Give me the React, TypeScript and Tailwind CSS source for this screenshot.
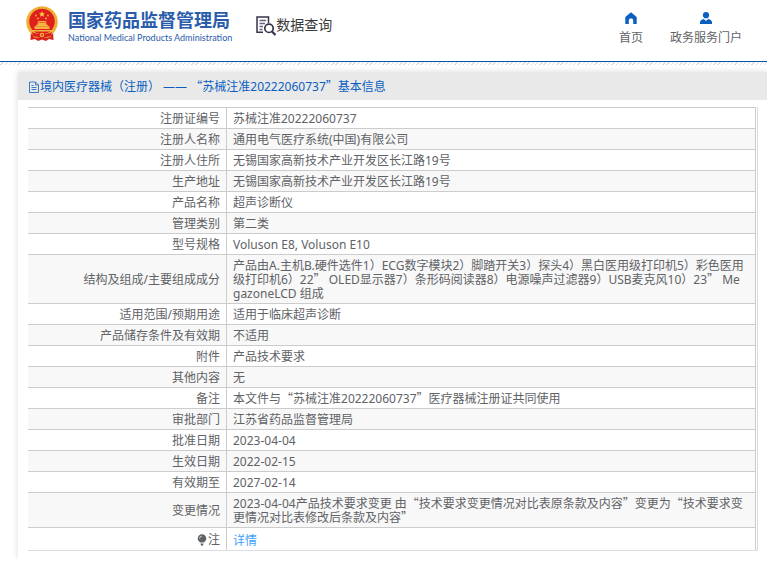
import type { ReactNode } from "react";

type Row = { label: string; value: string };

const rows: Row[] = [
  { label: "注册证编号", value: "苏械注准20222060737" },
  { label: "注册人名称", value: "通用电气医疗系统(中国)有限公司" },
  { label: "注册人住所", value: "无锡国家高新技术产业开发区长江路19号" },
  { label: "生产地址", value: "无锡国家高新技术产业开发区长江路19号" },
  { label: "产品名称", value: "超声诊断仪" },
  { label: "管理类别", value: "第二类" },
  { label: "型号规格", value: "Voluson E8, Voluson E10" },
  {
    label: "结构及组成/主要组成成分",
    value:
      "产品由A.主机B.硬件选件1）ECG数字模块2）脚踏开关3）探头4）黑白医用级打印机5）彩色医用级打印机6）22” OLED显示器7）条形码阅读器8）电源噪声过滤器9）USB麦克风10）23” MegazoneLCD 组成",
  },
  { label: "适用范围/预期用途", value: "适用于临床超声诊断" },
  { label: "产品储存条件及有效期", value: "不适用" },
  { label: "附件", value: "产品技术要求" },
  { label: "其他内容", value: "无" },
  { label: "备注", value: "本文件与“苏械注准20222060737”医疗器械注册证共同使用" },
  { label: "审批部门", value: "江苏省药品监督管理局" },
  { label: "批准日期", value: "2023-04-04" },
  { label: "生效日期", value: "2022-02-15" },
  { label: "有效期至", value: "2027-02-14" },
  {
    label: "变更情况",
    value:
      "2023-04-04产品技术要求变更 由“技术要求变更情况对比表原条款及内容”变更为“技术要求变更情况对比表修改后条款及内容”",
  },
];

// Curly quotes take the full-width glyphs of the Chinese font
const CnText = ({ children }: { children: string }) => (
  <>
    {children.split(/([“”])/).map((part, i) =>
      part === "“" || part === "”" ? (
        <span key={i} className="font-['Noto_Sans_CJK_SC',sans-serif] leading-[10px]">{part}</span>
      ) : (
        part
      )
    )}
  </>
);

const Emblem = () => (
  <svg viewBox="0 0 32 36" className="h-9 w-8 shrink-0" aria-hidden="true">
    <path d="M5 24 L4.500 34 L9 33 L12 35 L16 33.500 L20 35 L23 33 L27.500 34 L27 24Z" fill="#d8201c" />
    <circle cx="16" cy="16" r="15.800" fill="#f0b83c" />
    <circle cx="16" cy="16" r="14.300" fill="none" stroke="#e39a2c" strokeWidth="1" strokeDasharray="2 1.500" />
    <circle cx="16" cy="15.500" r="12.800" fill="#df1f1c" />
    <path d="M16 5.200l.9 2h2.100l-1.600 1.400.6 2.200-2-1.200-2 1.200.6-2.200L13 7.200h2.100z" fill="#f8d04c" />
    <g fill="#f3b540">
      <circle cx="10" cy="9.500" r=".9" />
      <circle cx="22" cy="9.500" r=".9" />
      <circle cx="12" cy="12.500" r=".9" />
      <circle cx="20" cy="12.500" r=".9" />
      <path d="M11 16.500l1.500-1.500h7l1.500 1.500zM11.800 17h8.400v1.500h-8.400zM9.500 20l1.500-1.500h10l1.500 1.500zM8.500 20.300h15v2.700h-15zM5.500 24h21l-1 1.600h-19z" />
    </g>
    <path d="M6 26c3 1.500 6 2 7.500 2.300a2.600 2.600 0 0 1 5 0C20 28 23 27.500 26 26l-1 3.500c-2 1-4.500 1.500-6 1.500a3.500 3.500 0 0 1-6 0c-1.500 0-4-.5-6-1.500z" fill="#d8201c" />
    <circle cx="16" cy="29" r="2.200" fill="#f0b83c" />
    <circle cx="16" cy="29" r=".9" fill="#d8201c" />
    <path d="M7 30.500c2 .8 3.500 1 5 1M25 30.500c-2 .8-3.500 1-5 1" stroke="#f0a83c" strokeWidth=".8" fill="none" />
  </svg>
);

const SearchDocIcon = () => (
  <svg viewBox="0 0 20 20" className="h-5 w-5 shrink-0" fill="none" stroke="#34344a" aria-hidden="true">
    <path d="M7 16.200H1V1h11.500v6" strokeWidth="1.500" />
    <path d="M3.500 4.500h6.500M3.500 7.500h5.500M3.500 10.500h3.500M3.500 13.500h3" strokeWidth="1.300" stroke="#66667a" />
    <circle cx="13" cy="12.300" r="4.200" strokeWidth="1.700" />
    <path d="M16 15.500l3.500 3.500" strokeWidth="2.200" />
  </svg>
);

const HomeIcon = () => (
  <svg viewBox="0 0 12 12" className="h-3 w-3" fill="#0a5fc0" aria-hidden="true">
    <path d="M6 .3L.3 5v7h3.500V8.300c0-1 .8-1.700 2.200-1.700s2.200.7 2.200 1.700V12h3.500V5z" />
  </svg>
);

const UserIcon = () => (
  <svg viewBox="0 0 12 12" className="h-3 w-3" fill="#0a5fc0" aria-hidden="true">
    <circle cx="6" cy="3.200" r="3.100" />
    <path d="M0 12V10.500c0-2 1.500-3.100 3.800-3.500L6 9l2.200-2C10.500 7.400 12 8.500 12 10.500V12z" />
  </svg>
);

const FileIcon = () => (
  <svg viewBox="0 0 10 12" className="mr-px h-3 w-[10px] shrink-0" fill="none" stroke="#3b7cc9" aria-hidden="true">
    <path d="M.5 1h6l3 3v7.500h-9zM6.500 1v3h3M2.500 4.500h2M2.500 6.500h5M2.500 8.500h5" />
  </svg>
);

const BulbIcon = () => (
  <svg viewBox="0 0 10 12" className="mr-px h-3 w-[10px]" fill="#5f6266" aria-hidden="true">
    <path d="M5 .2a4.300 4.300 0 0 0-4.300 4.300c0 2 1.500 3 2.500 4.100h3.600c1-1.100 2.500-2.100 2.500-4.100A4.300 4.300 0 0 0 5 .2zM3.600 9.400h2.800v1.200L5.500 11.700h-1l-.9-1.100z" />
    <path d="M2.500 4.500A2.400 2.400 0 0 1 4.800 2.200" stroke="#fff" strokeWidth=".7" fill="none" />
  </svg>
);

const NavItem = ({ icon, label }: { icon: ReactNode; label: string }) => (
  <a href="#" className="flex flex-col items-center gap-[5px] leading-[18px]">
    {icon}
    {label}
  </a>
);

const labelCell = "border-r border-b border-[#ccc] pt-1 pb-[2px] pr-[6px] text-right font-normal";
const valueCell = "border-r border-b border-[#ccc] pt-1 pb-[2px] pr-[9px] pl-[6px] break-all";

const App = () => {
  return (
    <div className="font-['Noto_Sans','Noto_Sans_CJK_SC',sans-serif] text-xs text-[#606266]">
      <header>
        <div className="box-content flex h-[61px] items-start justify-between border-b border-[#0a57a8] pr-[25px] pl-[26px]">
          <div className="flex items-start pt-[6px]">
            <Emblem />
            <div className="ml-[10px] pt-[3px] text-[#2a5cab]">
              <h1 className="text-[18px] leading-[22px] font-bold">国家药品监督管理局</h1>
              <p className="font-['Lato',sans-serif] text-[9px] leading-[13px]">
                National Medical Products Administration
              </p>
            </div>
            <div className="ml-6 flex items-start pt-[10px]">
              <SearchDocIcon />
              <span className="text-[14px] leading-[18px] text-[#3a3a3a]">数据查询</span>
            </div>
          </div>
          <nav className="flex gap-[27px] pt-3">
            <NavItem icon={<HomeIcon />} label="首页" />
            <NavItem icon={<UserIcon />} label="政务服务门户" />
          </nav>
        </div>
        <div className="h-[3px] bg-[repeating-linear-gradient(135deg,#fff_0px,#fff_2px,#ddd_2px,#ddd_3px)]" />
      </header>

      <main className="mt-[7px] ml-[18px] shadow-[0_0_6px_rgba(0,0,0,0.15)]">
        <h2 className="flex items-center bg-[#e9e9e9] px-[11px] pt-[6px] pb-1 leading-[18px] text-[#0a5fc0]">
          <FileIcon />
          <span>
            <CnText>境内医疗器械（注册） —— “苏械注准20222060737”基本信息</CnText>
          </span>
        </h2>
        <div className="pt-[7px] pr-[9px] pb-2 pl-[10px]">
          <div className="border-r border-b border-[#dcdce4] pr-px">
            <table className="w-full border-separate border-spacing-0 border-t border-[#ccc] leading-[14px]">
              <tbody>
                {rows.map((row) => (
                  <tr key={row.label} className="even:bg-[#f8f8f8]">
                    <th scope="row" className={`w-[199px] ${labelCell}`}>{row.label}</th>
                    <td className={valueCell}>
                      <CnText>{row.value}</CnText>
                    </td>
                  </tr>
                ))}
                <tr>
                  <th scope="row" className="border-r border-[#ccc] pt-[5px] pb-[3px] pr-[6px] font-normal">
                    <span className="flex items-center justify-end">
                      <BulbIcon />
                      <span>注</span>
                    </span>
                  </th>
                  <td className="border-r border-[#ccc] px-[6px] pt-[6px] pb-[2px]">
                    <a href="#" className="text-[#409eff]">详情</a>
                  </td>
                </tr>
              </tbody>
            </table>
          </div>
        </div>
      </main>
    </div>
  );
};

export default App;
